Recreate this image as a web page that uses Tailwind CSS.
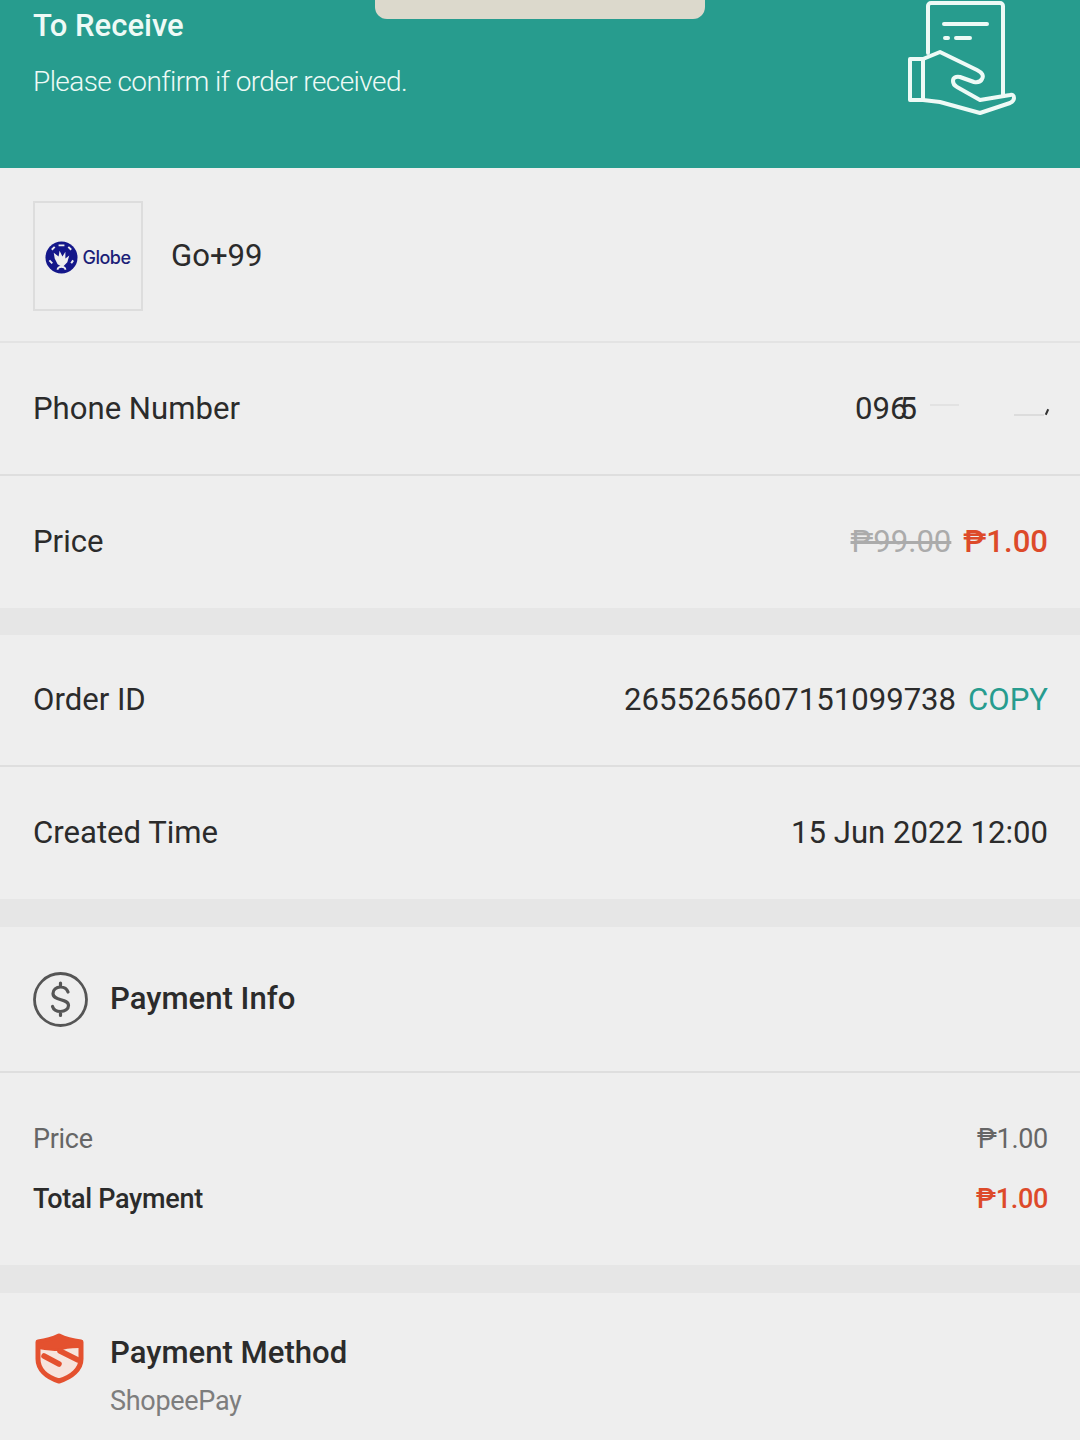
<!DOCTYPE html>
<html lang="en">
<head>
    <meta charset="UTF-8">
    <title>Order Details</title>
    <script src="https://cdn.jsdelivr.net/npm/@tailwindcss/browser@4"></script>
</head>
<body class="bg-[#eeeeee] font-['Roboto',sans-serif] text-[#2b2b2b]">
<div class="relative w-[1080px] h-[1440px] overflow-hidden flex flex-col">
    <!-- Status banner -->
    <header class="relative h-[168px] shrink-0 bg-[#279c8e] px-[33px] text-[#eefaf6]">
        <div class="absolute left-[375px] top-[-20px] w-[330px] h-[39px] rounded-[12px] bg-[#dcd9cc]"></div>
        <h1 class="pt-[8px] text-[31px] leading-[36px] font-medium">To Receive</h1>
        <p class="mt-[20px] text-[28px] leading-[36px] font-light tracking-[-0.58px]">Please confirm if order received.</p>
        <svg class="absolute left-[905px] top-0" width="114" height="116" viewBox="0 0 114 116" fill="none" stroke="#eefaf6" stroke-width="4" stroke-linecap="round" stroke-linejoin="round">
            <path d="M23 53V6a3 3 0 0 1 3-3h69a3 3 0 0 1 3 3v89"/>
            <path d="M39 24h43M40 38h3M51 38h14"/>
            <path d="M5 59h13v41H5z"/>
            <path d="M18 59l17-7 37 18q8 4 5 9q-2 4-8 3L55 77q-7-1-7 4q0 4 4 6l23 13 30-5q4-1 4 3q0 3-4 5L75 113 35 102 18 100"/>
        </svg>
    </header>

    <!-- Product -->
    <section class="h-[175px] shrink-0 flex items-center gap-[28px] pl-[33px] pr-[32px] pt-[2px] border-b-2 border-[#e3e3e3]">
        <div class="w-[110px] h-[110px] border-2 border-[#dddddd] flex items-center justify-center gap-[4px] pt-[3px]">
            <svg width="33" height="33" viewBox="0 0 34 34">
                <circle cx="17" cy="17" r="16.500" fill="#14178a"/>
                <path d="M9 12l5 4 1-6 3 6 3-5 0 7 4-3-2 7-5 5-5-3-3-6z" fill="#eeeeee"/>
                <path d="M13 29.500a4 3 0 0 1 8 0M7 9l3-3M14 4.500h6M24 6l3 3M4.500 20l3 3M27 23l2-3" fill="none" stroke="#eeeeee" stroke-width="2"/>
            </svg>
            <span class="text-[#1c1f78] text-[18px] font-medium font-['Inter',sans-serif] tracking-[-0.5px]">Globe</span>
        </div>
        <span class="text-[31.100px] pt-[2px]">Go+99</span>
    </section>

    <!-- Phone + price -->
    <section class="h-[133px] shrink-0 flex items-center justify-between pl-[33px] pr-[32px] pt-[1px] border-b-2 border-[#dedede]">
        <span class="text-[31.100px]">Phone Number</span>
        <div class="relative flex items-center w-[193px] text-[31.100px]">
            <span>09<span class="tracking-[-8px]">6</span>5</span>
            <span class="ml-[13px] mb-[8px] w-[29px] h-[2px] bg-[#e2e2e2]"></span>
            <span class="ml-[55px] mt-[12px] w-[30px] h-[2px] bg-[#dcdcdc]"></span>
            <span class="absolute right-[0px] top-[23px] w-[2px] h-[6px] bg-[#333333] rotate-[25deg]"></span>
        </div>
    </section>
    <section class="h-[132px] shrink-0 flex items-center justify-between pl-[33px] pr-[32px]">
        <span class="text-[31.100px]">Price</span>
        <div class="flex items-center gap-[12px] text-[31.100px]">
            <span class="text-[#ababab] line-through">₱99.00</span>
            <span class="text-[#dd4a2a] font-medium">₱1.00</span>
        </div>
    </section>
    <div class="h-[27px] shrink-0 bg-[#e6e6e6]"></div>

    <!-- Order -->
    <section class="h-[132px] shrink-0 flex items-center justify-between pl-[33px] pr-[32px] border-b-2 border-[#dedede]">
        <span class="text-[31.100px]">Order ID</span>
        <div class="flex items-center gap-[12px] text-[31.100px]">
            <span>2655265607151099738</span>
            <span class="text-[#279c8e]">COPY</span>
        </div>
    </section>
    <section class="h-[132px] shrink-0 flex items-center justify-between pl-[33px] pr-[32px] pt-[1px]">
        <span class="text-[31.100px]">Created Time</span>
        <span class="text-[31.100px]">15 Jun 2022 12:00</span>
    </section>
    <div class="h-[28px] shrink-0 bg-[#e6e6e6]"></div>

    <!-- Payment info -->
    <section class="h-[146px] shrink-0 flex items-center gap-[22px] pl-[33px] pr-[32px] border-b-2 border-[#dedede]">
        <svg width="55" height="55" viewBox="0 0 55 55" fill="none" stroke="#555555" stroke-width="2.800" stroke-linecap="round">
            <circle cx="27.500" cy="27.500" r="26"/>
            <path stroke-width="3.200" d="M35 20c-1-3-4-5-7.500-5-4.500 0-7.500 3-7.500 6.500 0 8 15.500 4.500 15.500 12 0 3.500-3.500 6-8 6-4 0-7-2-8-5M27.500 11v4M27.500 39.500v4"/>
        </svg>
        <h2 class="text-[31.100px] font-medium">Payment Info</h2>
    </section>
    <section class="h-[192px] shrink-0 flex flex-col gap-[24px] pt-[48px] pl-[33px] pr-[32px] text-[27px] leading-[36px] tracking-[-0.3px]">
        <div class="flex justify-between text-[#666666]">
            <span>Price</span>
            <span>₱1.00</span>
        </div>
        <div class="flex justify-between font-medium">
            <span>Total Payment</span>
            <span class="text-[#dd4a2a]">₱1.00</span>
        </div>
    </section>
    <div class="h-[28px] shrink-0 bg-[#e6e6e6]"></div>

    <!-- Payment method -->
    <section class="flex gap-[25px] pl-[33px] pr-[32px] pt-[40px]">
        <svg width="52" height="52" viewBox="0 0 52 52" fill="none" stroke="#e4512f" stroke-linecap="round" stroke-linejoin="round">
            <path d="M26 3c6 3 14 5 22 6v17c0 10-9 18-22 22C13 44 5 36 5 26V9c8-1 15-3 21-6z" stroke-width="5" fill="#f6e4dd"/>
            <path d="M6 9c8-1 15-3 20-5 5 2 12 4 20 5v5c-8 0-16 1-20 3-6 0-14-1-20-2z" fill="#e4512f" stroke-width="2"/>
            <path d="M27 18l18 9M11 23l15 8" stroke-width="5.500"/>
        </svg>
        <div>
            <h2 class="text-[31.100px] leading-[40px] font-medium">Payment Method</h2>
            <p class="mt-[10px] text-[27px] leading-[36px] tracking-[-0.3px] text-[#7d7d7d]">ShopeePay</p>
        </div>
    </section>
</div>
</body>
</html>
